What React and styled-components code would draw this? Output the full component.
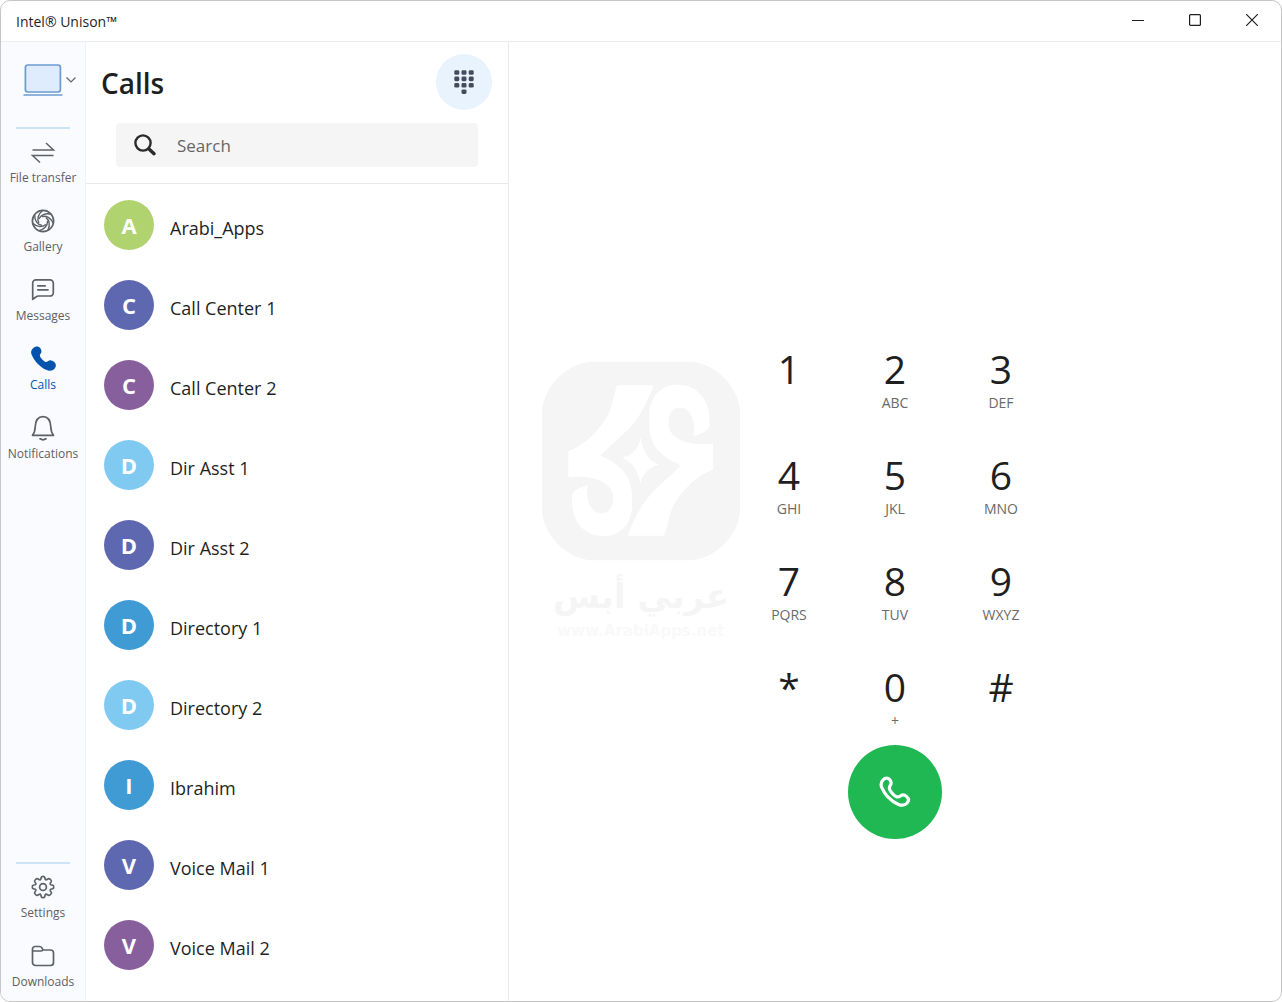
import React, { useState } from 'react'
import styled, { createGlobalStyle } from 'styled-components'

const GlobalStyle = createGlobalStyle`
  * {
    box-sizing: border-box;
  }

  body {
    margin: 0;
    background: #fff;
    color: #1f1f1f;
    font-family: 'Open Sans', 'Noto Sans', sans-serif;
  }

  button {
    border: 0;
    padding: 0;
    background: none;
    color: inherit;
    font: inherit;
    cursor: pointer;
  }

  svg {
    display: block;
  }
`

const Window = styled.div`
  position: relative;
  display: flex;
  flex-direction: column;
  min-height: 100vh;
  border: 1px solid #c6c6c6;
  border-radius: 10px;
  overflow: hidden;
`

const TitleBar = styled.header`
  display: flex;
  align-items: center;
  justify-content: space-between;
  height: 41px;
  padding: 0 1px 0 15px;
  border-bottom: 1px solid #ececec;
  font-size: 14px;
`

const WindowControls = styled.div`
  display: flex;
  height: 100%;
`

const WindowButton = styled.button`
  display: grid;
  place-items: center;
  width: 57px;
  height: 38px;
`

const Body = styled.div`
  flex: 1;
  display: flex;
`

const Sidebar = styled.nav`
  display: flex;
  flex-direction: column;
  justify-content: space-between;
  flex: 0 0 85px;
  border-right: 1px solid #f0f2f4;
  background: #f9fbfe;
`

const DeviceButton = styled.button`
  display: flex;
  align-items: center;
  gap: 3px;
  height: 85px;
  padding: 0 0 9px 22px;
`

const NavGroup = styled.div`
  display: flex;
  flex-direction: column;

  &::before {
    content: '';
    height: 2px;
    margin: 0 15px -1px;
    background: #cde4f7;
  }
`

const NavItem = styled.button`
  display: flex;
  flex-direction: column;
  align-items: center;
  gap: 5px;
  height: 69px;
  padding-top: 11px;
  color: ${({ $active }) => ($active ? '#0054ae' : '#5e6165')};
  font-size: 12px;
  line-height: 16px;
  white-space: nowrap;
`

const CallsPanel = styled.section`
  flex: 0 0 423px;
  border-right: 1px solid #e9e9e9;
`

const PanelHeader = styled.div`
  border-bottom: 1px solid #e9e9e9;
`

const PanelTitleRow = styled.div`
  display: flex;
  align-items: center;
  justify-content: space-between;
  padding: 12px 16px 0 15px;
`

const PanelTitle = styled.h1`
  margin: 0;
  padding-top: 2px;
  font-size: 28px;
  font-weight: 600;
  line-height: 40px;
`

const DialpadToggle = styled.button`
  display: grid;
  place-items: center;
  width: 56px;
  height: 56px;
  border-radius: 50%;
  background: #e8f3fe;
`

const SearchBox = styled.label`
  display: flex;
  align-items: center;
  gap: 21px;
  height: 44px;
  margin: 13px 30px 16px;
  padding: 0 18px;
  border-radius: 4px;
  background: #f5f5f5;
`

const SearchInput = styled.input`
  flex: 1;
  min-width: 0;
  padding: 0;
  border: 0;
  outline: 0;
  background: none;
  color: #1f1f1f;
  font: inherit;
  font-size: 17px;

  &::placeholder {
    color: #666;
    opacity: 1;
  }
`

const ContactList = styled.ul`
  margin: 0;
  padding: 0;
  list-style: none;
`

const Contact = styled.button`
  display: flex;
  align-items: center;
  gap: 16px;
  width: 100%;
  height: 80px;
  padding: 2px 18px 0;
  text-align: left;
`

const Avatar = styled.span`
  display: grid;
  place-items: center;
  width: 50px;
  height: 50px;
  border-radius: 50%;
  background: ${({ $color }) => $color};
  color: #fff;
  font-size: 22px;
  font-weight: 700;
`

const ContactName = styled.span`
  padding-top: 6px;
  font-size: 18px;
  line-height: 24px;
`

const Dialer = styled.main`
  flex: 1;
  display: flex;
  flex-direction: column;
  align-items: center;
  justify-content: center;
  padding-top: 117px;
`

const Keypad = styled.div`
  display: grid;
  grid-template-columns: repeat(3, 106px);
`

const Key = styled.button`
  display: flex;
  flex-direction: column;
  align-items: center;
  height: 106px;
  padding-top: 23px;
`

const KeyDigit = styled.span`
  font-size: 39px;
  line-height: 50px;
`

const KeyLetters = styled.span`
  color: #6a6a6a;
  font-size: 14px;
  line-height: 18px;
`

const CallButton = styled.button`
  display: grid;
  place-items: center;
  width: 94px;
  height: 94px;
  border-radius: 50%;
  background: #20b852;
`

const Watermark = styled.div`
  position: absolute;
  top: 50%;
  left: 50%;
  display: flex;
  flex-direction: column;
  align-items: center;
  transform: translate(-50%, -50%);
  color: #f5f5f5;
  font-family: 'DejaVu Sans', sans-serif;
  font-weight: 700;
  pointer-events: none;
`

const WatermarkName = styled.span`
  margin-top: 10px;
  font-size: 34px;
  line-height: 50px;
`

const WatermarkUrl = styled.span`
  color: #f9f9f9;
  font-size: 15px;
  line-height: 20px;
`

const HANDSET =
  'M3 2.4C5.6-.2 9.6 0 11.4 2.8c1.4 2.1 1.8 4.5.2 6.5-1.4 1.8-1 3 .8 5.3 1.8 2.3 3.2 3.6 4.8 4.4 1.2.5 2.2-.1 3.4-1 2.2-1.6 4.6-1.1 7 .8 2.6 2.1 3 5.6.9 8-2.4 2.9-6.3 3.4-10.3 1.6C11 25.1 4.4 18.1 1 10.4-.4 7.3.4 4.9 3 2.4Z'

const Line = ({ children }) => (
  <svg width="26" height="26" viewBox="0 0 26 26" fill="none" stroke="currentColor" strokeWidth="1.7" strokeLinecap="round" strokeLinejoin="round">
    {children}
  </svg>
)

const TransferIcon = () => (
  <Line>
    <path d="M2.5 11H23.5L16 4M23.5 16.5H2.5L10 23.5" strokeWidth="1.5" strokeLinecap="butt" strokeLinejoin="miter" />
  </Line>
)

const BLADES = [0, 1, 2, 3, 4, 5, 6].map((n) => (n * 360) / 7)

const GalleryIcon = () => (
  <Line>
    <circle cx="13" cy="13" r="10.6" />
    {BLADES.map((angle) => (
      <path key={angle} d="M9.2 10.6C10.6 7.200 15 4.800 21 6.200" strokeWidth="1.4" transform={`rotate(${angle} 13 13)`} />
    ))}
  </Line>
)

const MessagesIcon = () => (
  <Line>
    <path d="M2.7 22.3V6a3.2 3.2 0 0 1 3.2-3.2h14.2A3.2 3.2 0 0 1 23.3 6v9.8a3.2 3.2 0 0 1-3.2 3.2H8.4c-1 0-1.7.3-2.4 1Z" />
    <path d="M7.8 8.8h7.4M7.8 12.8h10.2" />
  </Line>
)

const CallsIcon = () => (
  <svg width="26" height="26" viewBox="-1 0 31 31" fill="currentColor">
    <path d={HANDSET} />
  </svg>
)

const BellIcon = () => (
  <Line>
    <path d="M2.5 20.3c2-2.3 2.5-4.5 2.7-8.3C5.5 5.6 8 1.6 13 1.6s7.5 4 7.8 10.400c.2 3.8.7 6 2.7 8.3Z" />
    <path d="M10 23.8c1.7 1.1 4.3 1.1 6 0" />
  </Line>
)

const SettingsIcon = () => (
  <Line>
    <path d="M11.3 3.2C11.6 2 14.4 2 14.7 3.2L15.2 5.2Q15.6 6.1 16.6 5.8L18.4 4.7C19.5 4.1 21.9 6.5 21.3 7.6L20.2 9.4Q19.9 10.4 20.8 10.8L22.8 11.3C24 11.6 24 14.4 22.8 14.7L20.8 15.2Q19.9 15.6 20.2 16.6L21.3 18.4C21.9 19.5 19.5 21.9 18.4 21.3L16.6 20.2Q15.6 19.9 15.2 20.8L14.7 22.8C14.4 24 11.6 24 11.3 22.8L10.8 20.8Q10.4 19.9 9.4 20.2L7.6 21.3C6.5 21.9 4.1 19.5 4.7 18.4L5.8 16.6Q6.1 15.6 5.2 15.2L3.2 14.7C2 14.4 2 11.6 3.2 11.3L5.2 10.8Q6.1 10.4 5.8 9.4L4.7 7.6C4.1 6.5 6.5 4.1 7.6 4.7L9.4 5.8Q10.4 6.1 10.8 5.2Z" />
    <circle cx="13" cy="13" r="3.4" />
  </Line>
)

const FolderIcon = () => (
  <Line>
    <path d="M2.5 8V6A2.5 2.5 0 0 1 5 3.5h4.5c1.2 0 1.800.5 2.400 1.400L13 7h7.500a3 3 0 0 1 3 3v9.500a3 3 0 0 1-3 3h-15a3 3 0 0 1-3-3V8h8.300c.8 0 1.500-.3 2.200-1" />
  </Line>
)

const LaptopIcon = () => (
  <svg width="40" height="34" viewBox="0 0 40 34" fill="none" stroke="#6c9bd2" strokeWidth="1.7">
    <rect x="2.4" y="2" width="35" height="27" rx="2.400" fill="#dfecfd" />
    <path d="M.5 32H39.5" />
  </svg>
)

const ChevronIcon = () => (
  <svg width="10" height="6" viewBox="0 0 10 6" fill="none" stroke="#666" strokeWidth="1.2">
    <path d="M.5.5 5 5 9.5.5" />
  </svg>
)

const SearchIcon = () => (
  <svg width="22" height="22" viewBox="0 0 22 22" fill="none" stroke="#2b2b2b" strokeLinecap="round">
    <circle cx="9" cy="9" r="7.6" strokeWidth="2.4" />
    <path d="M15 15l5 4.700" strokeWidth="3.4" />
  </svg>
)

const DialpadIcon = () => (
  <svg width="20" height="24" viewBox="0 0 20 24" fill="#454b5c">
    {[0, 1, 2].map((row) =>
      [0, 1, 2].map((col) => (
        <rect key={`${row}${col}`} x={0.3 + col * 7.2} y={0.2 + row * 6.4} width="5" height="4.6" rx="1.4" />
      ))
    )}
    <rect x="7.5" y="19.4" width="5" height="4.6" rx="1.4" />
  </svg>
)

const HandsetIcon = () => (
  <svg width="32" height="32" viewBox="-.5 -.5 32 32" fill="none" stroke="#fff" strokeWidth="3.2" strokeLinejoin="round">
    <path d="M3.8 3.2C5.9 1 9 1.2 10.5 3.4c1.3 1.9 1.5 3.9.2 5.6-1.6 2.1-1.1 3.9.9 6.4 1.7 2.2 3.3 3.8 5 4.7 1.7.8 3.2.2 4.7-.9 1.8-1.3 3.8-.9 5.7.7 2.2 1.9 2.4 4.5.6 6.6-2.2 2.400-5.500 2.800-9 1.200C11.5 24.5 5.2 17.9 2.1 10.6 1 7.6 1.6 5.3 3.8 3.2Z" />
  </svg>
)

const WatermarkLogo = () => (
  <svg width="198" height="199" viewBox="37 36 594 597">
    <path fill="#f5f5f5" d="M192 36H476C550 38 620 100 631 180V488C620 570 550 630 476 633H192C118 630 48 570 37 488V180C48 100 118 38 192 36Z" />
    {[0, 180].map((angle) => (
      <path
        key={angle}
        fill="#fff"
        transform={`rotate(${angle} 333 333)`}
        d="M262 107H372C352 160 328 210 285 250C260 274 235 295 212 318C270 345 307 375 307 440V480C300 530 268 560 222 560C160 558 122 515 127 436C132 420 155 412 175 407C165 450 185 492 215 492C245 490 255 460 248 430C235 390 180 378 116 383V305C175 285 240 215 250 150Z"
      />
    ))}
    <path fill="#fff" d="M333 264C340 305 355 335 388 345C355 355 338 375 333 402C325 365 310 340 278 325C310 315 325 300 333 264Z" />
  </svg>
)

const mainNav = [
  { label: 'File transfer', Icon: TransferIcon },
  { label: 'Gallery', Icon: GalleryIcon },
  { label: 'Messages', Icon: MessagesIcon },
  { label: 'Calls', Icon: CallsIcon },
  { label: 'Notifications', Icon: BellIcon }
]

const footerNav = [
  { label: 'Settings', Icon: SettingsIcon },
  { label: 'Downloads', Icon: FolderIcon }
]

const contacts = [
  { name: 'Arabi_Apps', color: '#b0d36f' },
  { name: 'Call Center 1', color: '#5e68b0' },
  { name: 'Call Center 2', color: '#875f9d' },
  { name: 'Dir Asst 1', color: '#80caf1' },
  { name: 'Dir Asst 2', color: '#5e68b0' },
  { name: 'Directory 1', color: '#409bd5' },
  { name: 'Directory 2', color: '#80caf1' },
  { name: 'Ibrahim', color: '#409bd5' },
  { name: 'Voice Mail 1', color: '#5e68b0' },
  { name: 'Voice Mail 2', color: '#875f9d' }
]

const keys = [
  ['1', ''],
  ['2', 'ABC'],
  ['3', 'DEF'],
  ['4', 'GHI'],
  ['5', 'JKL'],
  ['6', 'MNO'],
  ['7', 'PQRS'],
  ['8', 'TUV'],
  ['9', 'WXYZ'],
  ['*', ''],
  ['0', '+'],
  ['#', '']
]

function App() {
  const [active, setActive] = useState('Calls')
  const [query, setQuery] = useState('')

  const renderNav = ({ label, Icon }) => (
    <NavItem key={label} $active={label === active} onClick={() => setActive(label)}>
      <Icon />
      {label}
    </NavItem>
  )

  const shown = contacts.filter((c) => c.name.toLowerCase().includes(query.toLowerCase()))

  return (
    <>
      <GlobalStyle />
      <Window>
        <TitleBar>
          <span>Intel® Unison™</span>
          <WindowControls>
            <WindowButton aria-label="Minimize">
              <svg width="12" height="12" stroke="#1f1f1f"><path d="M0 6.5H12" /></svg>
            </WindowButton>
            <WindowButton aria-label="Maximize">
              <svg width="12" height="12" fill="none" stroke="#1f1f1f" strokeWidth="1.2"><rect x=".6" y=".6" width="10.8" height="10.8" rx="1" /></svg>
            </WindowButton>
            <WindowButton aria-label="Close">
              <svg width="12" height="12" stroke="#1f1f1f" strokeWidth="1.2"><path d="M0 0 12 12M12 0 0 12" /></svg>
            </WindowButton>
          </WindowControls>
        </TitleBar>
        <Body>
          <Sidebar>
            <div>
              <DeviceButton aria-label="Select device">
                <LaptopIcon />
                <ChevronIcon />
              </DeviceButton>
              <NavGroup>{mainNav.map(renderNav)}</NavGroup>
            </div>
            <NavGroup>{footerNav.map(renderNav)}</NavGroup>
          </Sidebar>
          <CallsPanel>
            <PanelHeader>
              <PanelTitleRow>
                <PanelTitle>Calls</PanelTitle>
                <DialpadToggle aria-label="Dial pad">
                  <DialpadIcon />
                </DialpadToggle>
              </PanelTitleRow>
              <SearchBox>
                <SearchIcon />
                <SearchInput
                  aria-label="Search"
                  placeholder="Search"
                  value={query}
                  onChange={(e) => setQuery(e.target.value)}
                />
              </SearchBox>
            </PanelHeader>
            <ContactList>
              {shown.map(({ name, color }) => (
                <li key={name}>
                  <Contact>
                    <Avatar $color={color}>{name[0]}</Avatar>
                    <ContactName>{name}</ContactName>
                  </Contact>
                </li>
              ))}
            </ContactList>
          </CallsPanel>
          <Dialer>
            <Keypad>
              {keys.map(([digit, letters]) => (
                <Key key={digit}>
                  <KeyDigit>{digit}</KeyDigit>
                  <KeyLetters>{letters}</KeyLetters>
                </Key>
              ))}
            </Keypad>
            <CallButton aria-label="Call">
              <HandsetIcon />
            </CallButton>
          </Dialer>
        </Body>
        <Watermark>
          <WatermarkLogo />
          <WatermarkName lang="ar" dir="rtl">عربي أبس</WatermarkName>
          <WatermarkUrl>www.ArabiApps.net</WatermarkUrl>
        </Watermark>
      </Window>
    </>
  )
}

export default App
